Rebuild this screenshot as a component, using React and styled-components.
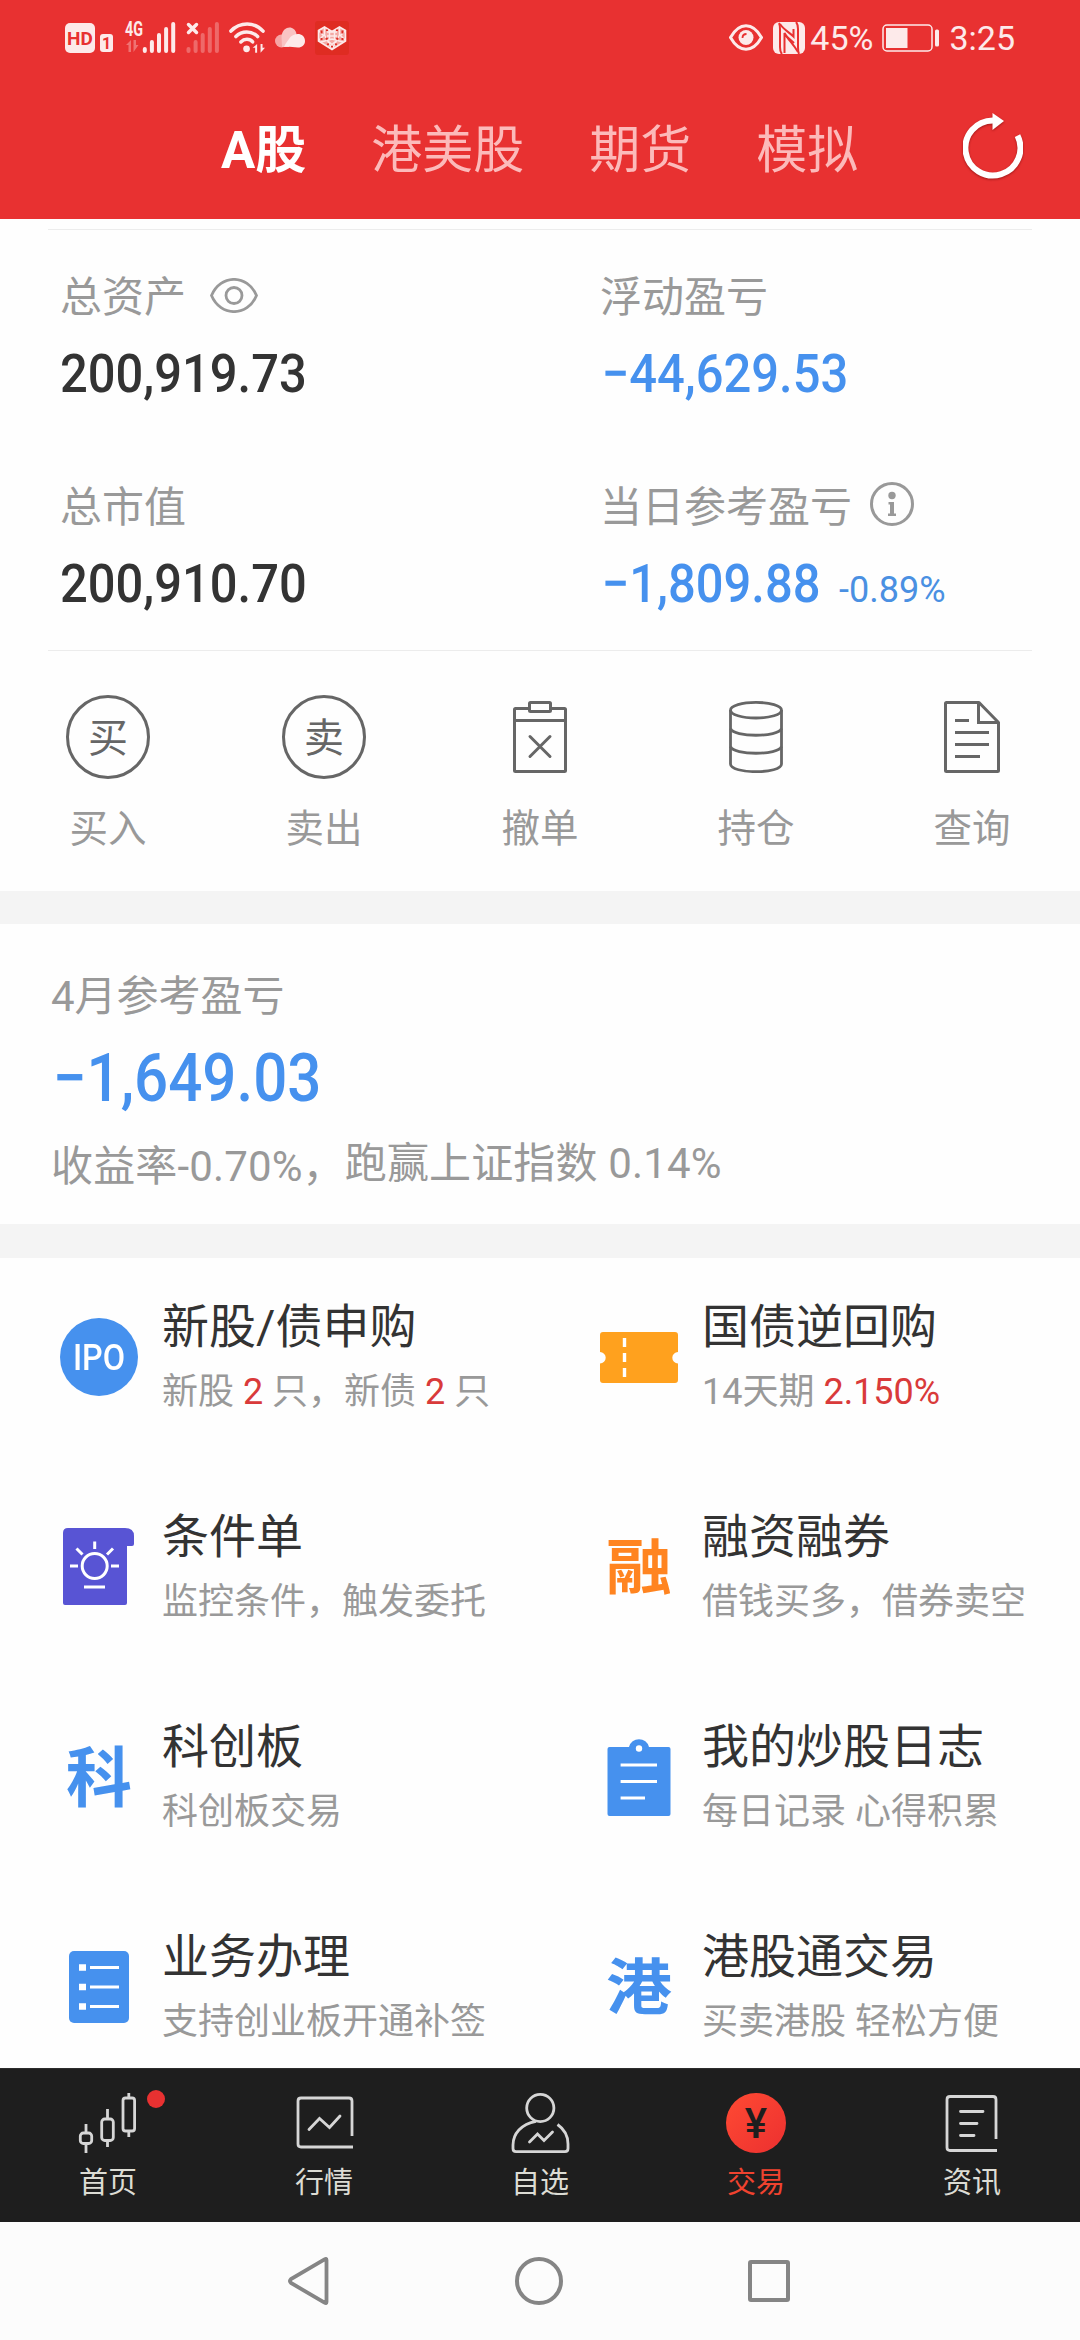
import styled, { createGlobalStyle } from "styled-components";

const RED = "#e83131";
const BLUE = "#4691ee";
const GREY = "#999999";

const GlobalStyle = createGlobalStyle`
  body {
    margin: 0;
    background: #fefefe;
    font-family: Roboto, "Noto Sans CJK SC", sans-serif;
    -webkit-font-smoothing: antialiased;
  }
  svg {
    display: block;
    flex-shrink: 0;
  }
`;
const Page = styled.div`
  display: flex;
  flex-direction: column;
  width: 1080px;
  height: 2340px;
  overflow: hidden;
  white-space: nowrap;
`;

/* header */
const Header = styled.header`
  flex-shrink: 0;
  height: 219px;
  background: ${RED};
  color: #fff;
`;
const StatusBar = styled.div`
  display: flex;
  align-items: center;
  justify-content: space-between;
  height: 75px;
  padding: 0 65px;
`;
const StatusGroup = styled.div`
  display: flex;
  align-items: center;
  gap: ${(props) => props.$gap}px;
`;
const HdBadge = styled.span`
  width: 30px;
  height: 30px;
  margin-right: -5px;
  border-radius: 5px;
  background: #fdeaea;
  color: ${RED};
  font-size: 19px;
  font-weight: 700;
  line-height: 31px;
  text-align: center;
`;
const SimBadge = styled.span`
  width: 13px;
  height: 18px;
  margin: 10px 2px 0 0;
  border-radius: 3px;
  background: #fdeaea;
  color: ${RED};
  font-size: 16px;
  font-weight: 700;
  line-height: 19px;
  text-align: center;
`;
const SignalIcon = styled.svg`
  margin-top: -12px;
  overflow: visible;
`;
const NfcIcon = styled.svg`
  margin: 0 -4px 0 1px;
`;
const StatusText = styled.span`
  font-size: 34px;
  line-height: 40px;
  color: #fdeaea;
`;
const TabRow = styled.div`
  display: flex;
  align-items: center;
  height: 144px;
  padding: 0 57px 0 221px;
`;
const Tabs = styled.nav`
  display: flex;
  gap: 65px;
  padding-top: 7px;
`;
const HeaderTab = styled.span`
  font-size: 51px;
  line-height: 60px;
  font-weight: ${(props) => (props.$active ? 700 : 400)};
  color: ${(props) => (props.$active ? "#fff" : "#fcbaba")};
`;
const RefreshButton = styled.div`
  margin: -3px 0 0 auto;
  filter: drop-shadow(0 1px 1px rgba(90, 0, 0, 0.5));
`;

/* account summary */
const Summary = styled.section`
  display: grid;
  flex-shrink: 0;
  grid-template-columns: 540px 1fr;
  grid-auto-rows: 210px;
  margin: 10px 48px 0;
  border-top: 1px solid #ececec;
  border-bottom: 1px solid #ececec;
`;
const SummaryCell = styled.div`
  padding: 43px 0 0 12px;
`;
const Label = styled.div`
  display: flex;
  align-items: center;
  font-size: 42px;
  line-height: 50px;
  height: 50px;
  color: ${GREY};
`;
const LabelIcon = styled.span`
  margin: ${(props) => props.$margin};
`;
const Amounts = styled.div`
  display: flex;
  align-items: baseline;
  margin-top: 23px;
`;
const Amount = styled.span`
  display: block;
  width: ${(props) => props.$width || "auto"};
  padding-left: ${(props) => (props.$loss ? 2 : 0)}px;
  font-size: 54px;
  line-height: 56px;
  font-weight: 500;
  color: ${(props) => (props.$loss ? BLUE : "#333")};
  transform: scaleX(0.905);
  transform-origin: left;
`;
const Rate = styled.span`
  font-size: 36px;
  color: #4a90e2;
`;

/* actions */
const Actions = styled.section`
  display: grid;
  flex-shrink: 0;
  grid-template-columns: repeat(5, 1fr);
  height: 240px;
`;
const Action = styled.div`
  display: flex;
  flex-direction: column;
  align-items: center;
  padding-top: 43px;
`;
const ActionIcon = styled.div`
  display: flex;
  align-items: center;
  justify-content: center;
  height: 86px;
`;
const RoundGlyph = styled.span`
  box-sizing: border-box;
  width: 84px;
  height: 84px;
  border: 3px solid #666;
  border-radius: 50%;
  color: #666;
  font-size: 40px;
  line-height: 81px;
  text-align: center;
`;
const ActionName = styled.span`
  margin-top: 27px;
  font-size: 38.5px;
  line-height: 44px;
  color: ${GREY};
`;
const Band = styled.div`
  flex-shrink: 0;
  height: ${(props) => props.$height}px;
  background: #f4f4f4;
`;

/* monthly result */
const Month = styled.section`
  box-sizing: border-box;
  flex-shrink: 0;
  height: 300px;
  padding: 48px 51px 0;
`;
const MonthAmount = styled(Amount)`
  margin-top: 26px;
  font-size: 67px;
  line-height: 60px;
  transform: scaleX(0.896);
`;
const MonthNote = styled.div`
  display: flex;
  margin-top: 31px;
  font-size: 42px;
  line-height: 50px;
  letter-spacing: 0.15px;
  color: ${GREY};
`;
const NotePart = styled.span`
  padding-top: ${(props) => (props.$low ? 3 : 0)}px;
`;

/* services */
const Services = styled.section`
  display: grid;
  flex: 1;
  min-height: 0;
  grid-template-columns: 1fr 1fr;
  grid-auto-rows: 210px;
  overflow: hidden;
`;
const Service = styled.div`
  display: flex;
  gap: 24px;
  padding-left: 60px;
`;
const ServiceIcon = styled.div`
  display: flex;
  align-items: center;
  justify-content: center;
  width: 78px;
  height: 80px;
  margin-top: 59px;
`;
const IpoIcon = styled.span`
  width: 78px;
  height: 78px;
  border-radius: 50%;
  background: ${BLUE};
  color: #fff;
  font-size: 36px;
  font-weight: 500;
  line-height: 81px;
  text-align: center;
`;
const IpoText = styled.span`
  display: block;
  transform: scaleX(0.9);
`;
const GlyphIcon = styled.span`
  font-size: 66px;
  font-weight: 700;
  line-height: 80px;
  padding-top: ${(props) => (props.$flat ? 3 : 6)}px;
  color: ${(props) => props.$color};
  transform: scaleY(${(props) => (props.$flat ? 0.92 : 0.98)});
`;
const ServiceText = styled.div`
  padding-top: 41px;
`;
const ServiceTitle = styled.div`
  font-size: 47px;
  line-height: 56px;
  color: #333;
`;
const ServiceNote = styled.div`
  margin-top: 15px;
  font-size: 36px;
  line-height: 44px;
  color: ${GREY};
`;
const Hot = styled.em`
  font-style: normal;
  color: #d93a3a;
`;

/* bottom bars */
const TabBar = styled.nav`
  box-sizing: border-box;
  display: grid;
  flex-shrink: 0;
  grid-template-columns: repeat(5, 1fr);
  height: 154px;
  border-top: 1px solid #2c2c2c;
  background: #1e1e1e;
`;
const BarItem = styled.div`
  position: relative;
  display: flex;
  flex-direction: column;
  align-items: center;
  padding-top: 24px;
  color: ${(props) => (props.$active ? "#f0432f" : "#dcdcd4")};
`;
const BarName = styled.span`
  margin-top: 12px;
  font-size: 29px;
  line-height: 36px;
`;
const RedDot = styled.i`
  position: absolute;
  top: 21px;
  left: 147px;
  width: 18px;
  height: 18px;
  border-radius: 50%;
  background: ${RED};
`;
const YuanIcon = styled.span`
  width: 60px;
  height: 60px;
  border-radius: 50%;
  background: linear-gradient(135deg, #ff4a33, #ec3030);
  color: #1e1e1e;
  font-size: 42px;
  font-weight: 500;
  line-height: 62px;
  text-align: center;
`;
const SystemNav = styled.div`
  display: flex;
  flex-shrink: 0;
  align-items: center;
  gap: 185px;
  height: 118px;
  padding-left: 288px;
  background: #fcfcfc;
`;

function SignalBars({ x, y = 0, opacity }) {
  return (
    <g stroke="#fdeaea" strokeWidth="4" strokeLinecap="round" opacity={opacity}>
      {[27, 20, 13, 7, 2].map((top, i) => (
        <path key={top} d={`M${x + i * 7.1} ${top + y}V${29 + y}`} />
      ))}
    </g>
  );
}

function MobileSignal() {
  return (
    <SignalIcon width="51" height="43" viewBox="0 0 51 43">
      <text x="0" y="26" fontSize="20" fontWeight="700" fill="#fdeaea" textLength="18" lengthAdjust="spacingAndGlyphs">4G</text>
      <g fill="#fdeaea" opacity="0.35">
        <path d="M1 35l5-5v12H3.500v-7z" />
        <path d="M13.500 35l-5 7V30H11v5z" />
      </g>
      <SignalBars x={19.800} y={12} opacity={1} />
    </SignalIcon>
  );
}

function NoSignal() {
  return (
    <svg width="33" height="31" viewBox="0 0 33 31">
      <SignalBars x={2.500} opacity={0.3} />
      <path d="M2.500 2.500l8 8M10.500 2.500l-8 8" stroke="#fdeaea" strokeWidth="3.500" strokeLinecap="round" />
    </svg>
  );
}

function Wifi() {
  return (
    <svg width="36" height="31" viewBox="0 0 36.500 31" fill="none" stroke="#fdeaea" strokeWidth="3.600" strokeLinecap="round">
      <path d="M2 9C11-.5 26-.5 34.500 9" />
      <path d="M7 14.500c6-6 16-6 22 0" />
      <path d="M12 20c3.500-3.500 9-3.500 12 0" />
      <circle cx="17.800" cy="27" r="3.400" fill="#fdeaea" stroke="none" />
      <path d="M24 26l4.500-4v9H26.500v-5zM36.500 26l-4.500 5v-9h2v4z" fill="#fdeaea" stroke="none" />
    </svg>
  );
}

function Cloud() {
  return (
    <svg width="30" height="21" viewBox="0 0 30 21">
      <circle cx="6.500" cy="14" r="6.500" fill="#f6a5a5" />
      <path d="M6.500 9C8-2 20-2 21.500 7L14 20H7z" fill="#f9c3c3" />
      <path d="M9 20c1-3 3-5 5-8 4-7 16-7 16 2 0 4-3 6.500-7 6.500-5 0-9-1-14-.5z" fill="#fdeaea" />
    </svg>
  );
}

function HeartApp() {
  return (
    <svg width="34" height="34" viewBox="0 0 34 34">
      <rect width="34" height="34" rx="3" fill="#df2c22" />
      <path d="M3.500 9.500L9.500 6l7.500 4.500L24.500 6l6 3.500V20L17 28.500 3.500 20z" fill="#f3a9a4" stroke="#fdeaea" strokeWidth="1.600" />
      <g stroke="#fdeaea" strokeWidth="1.500" fill="none">
        <path d="M3.500 9.500l5 5-5 5M30.500 9.500l-5 5 5 5M9.500 6v8M24.500 6v8M9.500 14l7.500 14M24.500 14L17 28.500M6 21l11-3 11 3" />
        <path d="M12 11h10M12 15h10M14.500 9v10M19.500 9v10M13 20l4 3.500 4-3.500" />
      </g>
      <path d="M6.500 9.500v3M27.500 9.500v3M6.500 17v2M27.500 17v2M12 8.500v1.500M22 8.500v1.500M12.500 22.500l1 1.500M21.500 22.500l-1 1.500M17 25v1.500M11 17l1.500 1.500M23 17l-1.500 1.500" stroke="#df2c22" strokeWidth="2" />
    </svg>
  );
}

function ComfortEye() {
  return (
    <svg width="34" height="27" viewBox="0 0 34 27" fill="none" stroke="#fdeaea" strokeWidth="3">
      <path d="M1.500 13.500C6 5.500 11 1.800 17 1.800s11 3.700 15.500 11.700C28 21.500 23 25.200 17 25.200S6 21.500 1.500 13.500z" />
      <circle cx="17" cy="13.500" r="7.500" fill="#fdeaea" stroke="none" />
      <path d="M13.500 14c0-2.500 1.500-4 4-4" stroke={RED} strokeWidth="1.800" />
    </svg>
  );
}

function Nfc() {
  return (
    <NfcIcon width="32" height="32" viewBox="0 0 32 32">
      <rect width="32" height="32" rx="6" fill="#fdeaea" />
      <g stroke={RED} strokeWidth="2" fill="none">
        <path d="M6 1c1 2 1 3 1 6v18c0 3 0 5 2 7" />
        <path d="M23 0c2 2 2 4 2 7v18c0 3 0 5 1 7" />
        <path d="M7 2c3 5 10 9 13.500 12.500V7M11.500 31V11c3 6 8 10 13.500 19" />
        <path d="M12 13l9 8" />
      </g>
    </NfcIcon>
  );
}

function Battery() {
  return (
    <svg width="58" height="28" viewBox="0 0 58 28">
      <rect x="1" y="1" width="49" height="26" rx="4" fill="none" stroke="#fdeaea" strokeWidth="1.500" />
      <rect x="4" y="4" width="21.500" height="20" fill="#fdeaea" />
      <rect x="53" y="5.500" width="4" height="17" rx="1.500" fill="#fdeaea" />
    </svg>
  );
}

function Refresh() {
  return (
    <svg width="60" height="68" viewBox="0 0 60 68">
      <path d="M54.500 23.700A27.500 27.500 0 1 1 30 8.500" fill="none" stroke="#fff" strokeWidth="6" />
      <path d="M29.500 1v17L41 9z" fill="#fff" />
    </svg>
  );
}

function EyeIcon() {
  return (
    <svg width="48" height="35" viewBox="0 0 48 35" fill="none" stroke={GREY} strokeWidth="2.800">
      <path d="M1.500 17.500c9-21.500 36-21.500 45 0-9 21.500-36 21.500-45 0z" />
      <circle cx="24" cy="17.500" r="8" />
    </svg>
  );
}

function InfoIcon() {
  return (
    <svg width="44" height="44" viewBox="0 0 44 44">
      <circle cx="22" cy="22" r="20.500" fill="none" stroke={GREY} strokeWidth="3" />
      <circle cx="22" cy="13.500" r="3.700" fill={GREY} />
      <path d="M18.500 20h5.500v11.500h2v2.500h-8v-2.500h2v-9h-1.500z" fill={GREY} />
    </svg>
  );
}

function CancelIcon() {
  return (
    <svg width="54" height="72" viewBox="0 0 54 72" fill="none" stroke="#666" strokeWidth="3">
      <rect x="1.500" y="7.500" width="51" height="63" rx="1" />
      <path d="M1.500 19.500h51" />
      <rect x="16.500" y="1.500" width="21" height="9" rx="1" fill="#fefefe" />
      <path d="M17 35.500l20 20M37 35.500l-20 20" strokeLinecap="round" />
    </svg>
  );
}

function HoldingIcon() {
  return (
    <svg width="54" height="72" viewBox="0 0 54 72" fill="none" stroke="#666" strokeWidth="2.800">
      <ellipse cx="27" cy="9.200" rx="25.500" ry="7.800" />
      <path d="M1.500 9v54c0 10.200 51 10.200 51 0V9" />
      <path d="M1.500 27.500c3 9 48 9 51 0M1.500 45.500c3 9 48 9 51 0" />
    </svg>
  );
}

function QueryIcon() {
  return (
    <svg width="56" height="72" viewBox="0 0 56 72" fill="none" stroke="#666" strokeWidth="3">
      <path d="M35 1.500H2.500Q1.500 1.500 1.500 2.500v67Q1.500 70.500 2.500 70.500h51Q54.500 70.500 54.500 69.500V21.500z" strokeLinejoin="round" />
      <path d="M34.500 1.500v20h20" />
      <path d="M11 19.500h14M11 31.500h34M11 43.500h34M11 55.500h25" />
    </svg>
  );
}

function TicketIcon() {
  return (
    <svg width="78" height="80" viewBox="0 0 78 80">
      <path d="M3 15h72q3 0 3 3v17a5.700 5.700 0 0 0 0 11.400V63q0 3-3 3H3q-3 0-3-3V46.400A5.700 5.700 0 0 0 0 35V18q0-3 3-3z" fill="#ffa11e" />
      <path d="M24.500 21v9M24.500 36v9M24.500 51v9" stroke="#fff" strokeWidth="3.400" />
    </svg>
  );
}

function ConditionIcon() {
  return (
    <svg width="78" height="80" viewBox="0 0 78 80">
      <path d="M8 1h57q9 0 9 8v8q0 2-2 2h-5v57q0 2-2 2H5q-2 0-2-2V6q0-5 5-5z" fill="#5854d4" />
      <g stroke="#fff" strokeWidth="3" fill="none">
        <circle cx="34.700" cy="39" r="12.500" />
        <path d="M34.700 14.500v7.500M10 39h8M51 39h8M16.500 21.500l6 6M53 21.500l-6 6M24 60h21" />
      </g>
    </svg>
  );
}

function DiaryIcon() {
  return (
    <svg width="78" height="80" viewBox="0 0 78 80">
      <path d="M9.500 10H29a10.300 10.300 0 0 1 20 0h19.500q2 0 2 2v65q0 2-2 2h-59q-2 0-2-2V12q0-2 2-2z" fill={BLUE} />
      <circle cx="39" cy="11.500" r="3.200" fill="#fff" />
      <path d="M20.600 28H57M20.600 44.500H57M20.600 61H45" stroke="#fff" strokeWidth="3" />
    </svg>
  );
}

function BusinessIcon() {
  return (
    <svg width="78" height="80" viewBox="0 0 78 80">
      <rect x="9" y="4" width="60" height="72" rx="5" fill={BLUE} />
      <path d="M19 20.500h7M19 40h7M19 59.500h7" stroke="#fff" strokeWidth="6.500" />
      <path d="M30 20.500h29M30 40h29M30 59.500h29" stroke="#fff" strokeWidth="3" />
    </svg>
  );
}

const barIconProps = {
  width: 60,
  height: 60,
  viewBox: "0 0 60 60",
  fill: "none",
  stroke: "#d6d6d6",
  strokeWidth: 2.800,
};

function HomeIcon() {
  return (
    <svg {...barIconProps}>
      <rect x="2.300" y="40" width="11.400" height="10.500" rx="3" />
      <rect x="23.700" y="26" width="11.600" height="21.500" rx="3" />
      <rect x="45" y="5" width="11.600" height="33" rx="2.500" />
      <path d="M8 31v9M8 50.500V60M29.500 16v10M29.500 47.500V54M50.800 0v5M50.800 38v6" />
    </svg>
  );
}

function MarketIcon() {
  return (
    <svg {...barIconProps}>
      <path d="M58 43V8q0-3-3-3H7Q4 5 4 8v43q0 3 3 3h52" />
      <path d="M15 36.500l10.500-11 10 9L46 23" strokeLinecap="round" />
    </svg>
  );
}

function WatchIcon() {
  return (
    <svg {...barIconProps}>
      <circle cx="30.300" cy="15" r="13.600" />
      <path d="M26 28.300C11 31 3 41 3 52v3.500Q3 58.600 6 58.600h49q3 0 3-3.100V51c0-8-4-15-10.500-19.500" />
      <path d="M19.500 49l8-8 6.500 6.500L42.500 39" strokeLinecap="round" />
    </svg>
  );
}

function NewsIcon() {
  return (
    <svg {...barIconProps}>
      <path d="M54 46V6.500q0-3-3-3H8q-3 0-3 3v48q0 3 3 3h47" />
      <path d="M18.500 18.500H41M18.500 30.500H35M18.500 42.500H32" strokeLinecap="round" />
    </svg>
  );
}

const services = [
  {
    title: "新股/债申购",
    note: <>新股 <Hot>2</Hot> 只，新债 <Hot>2</Hot> 只</>,
    icon: <IpoIcon><IpoText>IPO</IpoText></IpoIcon>,
  },
  { title: "国债逆回购", note: <>14天期 <Hot>2.150%</Hot></>, icon: <TicketIcon /> },
  { title: "条件单", note: "监控条件，触发委托", icon: <ConditionIcon /> },
  { title: "融资融券", note: "借钱买多，借券卖空", icon: <GlyphIcon $flat $color="#ff8420">融</GlyphIcon> },
  { title: "科创板", note: "科创板交易", icon: <GlyphIcon $color={BLUE}>科</GlyphIcon> },
  { title: "我的炒股日志", note: "每日记录 心得积累", icon: <DiaryIcon /> },
  { title: "业务办理", note: "支持创业板开通补签", icon: <BusinessIcon /> },
  { title: "港股通交易", note: "买卖港股 轻松方便", icon: <GlyphIcon $flat $color={BLUE}>港</GlyphIcon> },
];

const actions = [
  { name: "买入", icon: <RoundGlyph>买</RoundGlyph> },
  { name: "卖出", icon: <RoundGlyph>卖</RoundGlyph> },
  { name: "撤单", icon: <CancelIcon /> },
  { name: "持仓", icon: <HoldingIcon /> },
  { name: "查询", icon: <QueryIcon /> },
];

const barItems = [
  { name: "首页", icon: <HomeIcon />, dot: true },
  { name: "行情", icon: <MarketIcon /> },
  { name: "自选", icon: <WatchIcon /> },
  { name: "交易", icon: <YuanIcon>¥</YuanIcon>, active: true },
  { name: "资讯", icon: <NewsIcon /> },
];

function App() {
  return (
    <Page>
      <GlobalStyle />
      <Header>
        <StatusBar>
          <StatusGroup $gap={10}>
            <HdBadge>HD</HdBadge>
            <SimBadge>1</SimBadge>
            <MobileSignal />
            <NoSignal />
            <Wifi />
            <Cloud />
            <HeartApp />
          </StatusGroup>
          <StatusGroup $gap={9}>
            <ComfortEye />
            <Nfc />
            <StatusText>45%</StatusText>
            <Battery />
            <StatusText>3:25</StatusText>
          </StatusGroup>
        </StatusBar>
        <TabRow>
          <Tabs>
            <HeaderTab $active>A股</HeaderTab>
            <HeaderTab>港美股</HeaderTab>
            <HeaderTab>期货</HeaderTab>
            <HeaderTab>模拟</HeaderTab>
          </Tabs>
          <RefreshButton>
            <Refresh />
          </RefreshButton>
        </TabRow>
      </Header>

      <Summary>
        <SummaryCell>
          <Label>
            总资产
            <LabelIcon $margin="0 0 5px 24px"><EyeIcon /></LabelIcon>
          </Label>
          <Amounts><Amount>200,919.73</Amount></Amounts>
        </SummaryCell>
        <SummaryCell>
          <Label>浮动盈亏</Label>
          <Amounts><Amount $loss>−44,629.53</Amount></Amounts>
        </SummaryCell>
        <SummaryCell>
          <Label>总市值</Label>
          <Amounts><Amount>200,910.70</Amount></Amounts>
        </SummaryCell>
        <SummaryCell>
          <Label>
            当日参考盈亏
            <LabelIcon $margin="0 0 8px 18px"><InfoIcon /></LabelIcon>
          </Label>
          <Amounts>
            <Amount $loss $width="237px">−1,809.88</Amount>
            <Rate>-0.89%</Rate>
          </Amounts>
        </SummaryCell>
      </Summary>

      <Actions>
        {actions.map((action) => (
          <Action key={action.name}>
            <ActionIcon>{action.icon}</ActionIcon>
            <ActionName>{action.name}</ActionName>
          </Action>
        ))}
      </Actions>
      <Band $height={33} />

      <Month>
        <Label>4月参考盈亏</Label>
        <MonthAmount $loss>−1,649.03</MonthAmount>
        <MonthNote>
          <NotePart $low>收益率-0.70%，</NotePart>
          <NotePart>跑赢上证指数 0.14%</NotePart>
        </MonthNote>
      </Month>
      <Band $height={34} />

      <Services>
        {services.map((service) => (
          <Service key={service.title}>
            <ServiceIcon>{service.icon}</ServiceIcon>
            <ServiceText>
              <ServiceTitle>{service.title}</ServiceTitle>
              <ServiceNote>{service.note}</ServiceNote>
            </ServiceText>
          </Service>
        ))}
      </Services>

      <TabBar>
        {barItems.map((item) => (
          <BarItem key={item.name} $active={item.active}>
            {item.icon}
            <BarName>{item.name}</BarName>
            {item.dot && <RedDot />}
          </BarItem>
        ))}
      </TabBar>
      <SystemNav>
        <svg width="42" height="50" viewBox="0 0 42 50">
          <path d="M38.500 4v42q0 2-2 .5L3 27q-2-2 0-4L36.500 3.500q2-1.500 2 .5z" fill="none" stroke="#858585" strokeWidth="3.800" />
        </svg>
        <svg width="48" height="48" viewBox="0 0 48 48">
          <circle cx="24" cy="24" r="22" fill="none" stroke="#858585" strokeWidth="4" />
        </svg>
        <svg width="42" height="42" viewBox="0 0 42 42">
          <rect x="2" y="2" width="38" height="38" rx="1" fill="none" stroke="#858585" strokeWidth="4" />
        </svg>
      </SystemNav>
    </Page>
  );
}

export default App;
